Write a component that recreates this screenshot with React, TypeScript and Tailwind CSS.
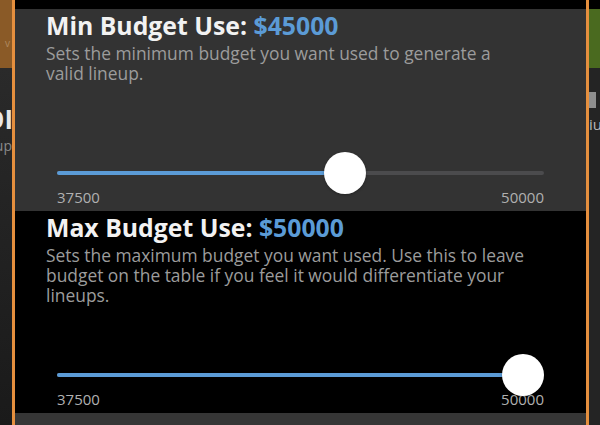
import React from 'react';

interface BudgetSliderProps {
  label: string;
  value: number;
  min: number;
  max: number;
  description: string;
  panelClass: string;
  restTrackClass: string;
}

const TRACK_WIDTH = 487;
const THUMB = 42;

function BudgetSlider({ label, value, min, max, description, panelClass, restTrackClass }: BudgetSliderProps) {
  const pct = (value - min) / (max - min);
  const center = THUMB / 2 + pct * (TRACK_WIDTH - THUMB);

  return (
    <div className={`flex flex-col h-[202px] pt-[2px] pb-[4px] ${panelClass}`}>
      <div className="px-[31px]">
        <h2 className="text-[24.8px] leading-[28px] font-bold text-[#f2f2f2]">
          {label}: <span className="text-[#5b9bd6]">${value}</span>
        </h2>
        <p className="mt-[4px] w-[483px] text-[17.4px] leading-[20px] text-[#9c9c9c]">{description}</p>
      </div>

      {/* Slider */}
      <div className="mt-auto px-[42px]">
        <div className={`relative h-[4px] rounded-full ${restTrackClass}`}>
          <div className="absolute left-0 top-0 h-full rounded-full bg-[#5b9bd6]" style={{ width: center }} />
          <div
            className="absolute top-1/2 z-10 w-[42px] h-[42px] -translate-x-1/2 -translate-y-1/2 rounded-full bg-white shadow-[0_1px_3px_rgba(0,0,0,0.3)]"
            style={{ left: center }}
          />
        </div>
        <div className="mt-[12px] flex justify-between text-[15px] leading-[20px] text-[#b0b0b0]">
          <span>{min}</span>
          <span>{max}</span>
        </div>
      </div>
    </div>
  );
}

export default function App() {
  return (
    <div
      className="flex w-[600px] h-[425px] overflow-hidden bg-[#1c1c1c]"
      style={{ fontFamily: '"Open Sans", Lato, sans-serif' }}
    >
      {/* Background page, left edge */}
      <div className="flex flex-col w-[12px] overflow-hidden">
        <div className="h-[68px] bg-[#8a5a27] flex flex-col items-end pt-[38px]">
          <span className="text-[10px] leading-[10px] text-[#b08a60] pr-[2px]">v</span>
        </div>
        <div className="flex-1 bg-gradient-to-b from-[#2a2a2a] to-[#1a1a1a] flex flex-col items-end pt-[38px]">
          <span className="whitespace-nowrap text-[26px] leading-[26px] font-bold text-[#e8e8e8] -mr-[1px]">OI</span>
          <span className="mt-[6px] whitespace-nowrap text-[14px] leading-[16px] text-[#8a8a8a]">up</span>
        </div>
      </div>

      <div className="w-[3px] bg-[#e58f3e]" />

      {/* Modal */}
      <div className="flex-1 flex flex-col">
        <div className="h-[9px] bg-black" />
        <BudgetSlider
          label="Min Budget Use"
          value={45000}
          min={37500}
          max={50000}
          description="Sets the minimum budget you want used to generate a valid lineup."
          panelClass="bg-[#333333]"
          restTrackClass="bg-[#4b4b4d]"
        />
        <BudgetSlider
          label="Max Budget Use"
          value={50000}
          min={37500}
          max={50000}
          description="Sets the maximum budget you want used. Use this to leave budget on the table if you feel it would differentiate your lineups."
          panelClass="bg-black"
          restTrackClass="bg-[#4b4b4d]"
        />
        <div className="flex-1 bg-[#363636]" />
      </div>

      <div className="w-[3px] bg-[#e58f3e]" />

      {/* Background page, right edge */}
      <div className="flex flex-col w-[11px] overflow-hidden">
        <div className="h-[9px] bg-black" />
        <div className="h-[59px] bg-[#4a6a1f]" />
        <div className="flex-1 bg-[#242424] flex flex-col pt-[24px]">
          <div className="w-[7px] h-[16px] bg-[#8e8e8e]" />
          <span className="mt-[8px] whitespace-nowrap text-[15px] leading-[16px] text-[#b8b8b8]">iu</span>
        </div>
      </div>
    </div>
  );
}
